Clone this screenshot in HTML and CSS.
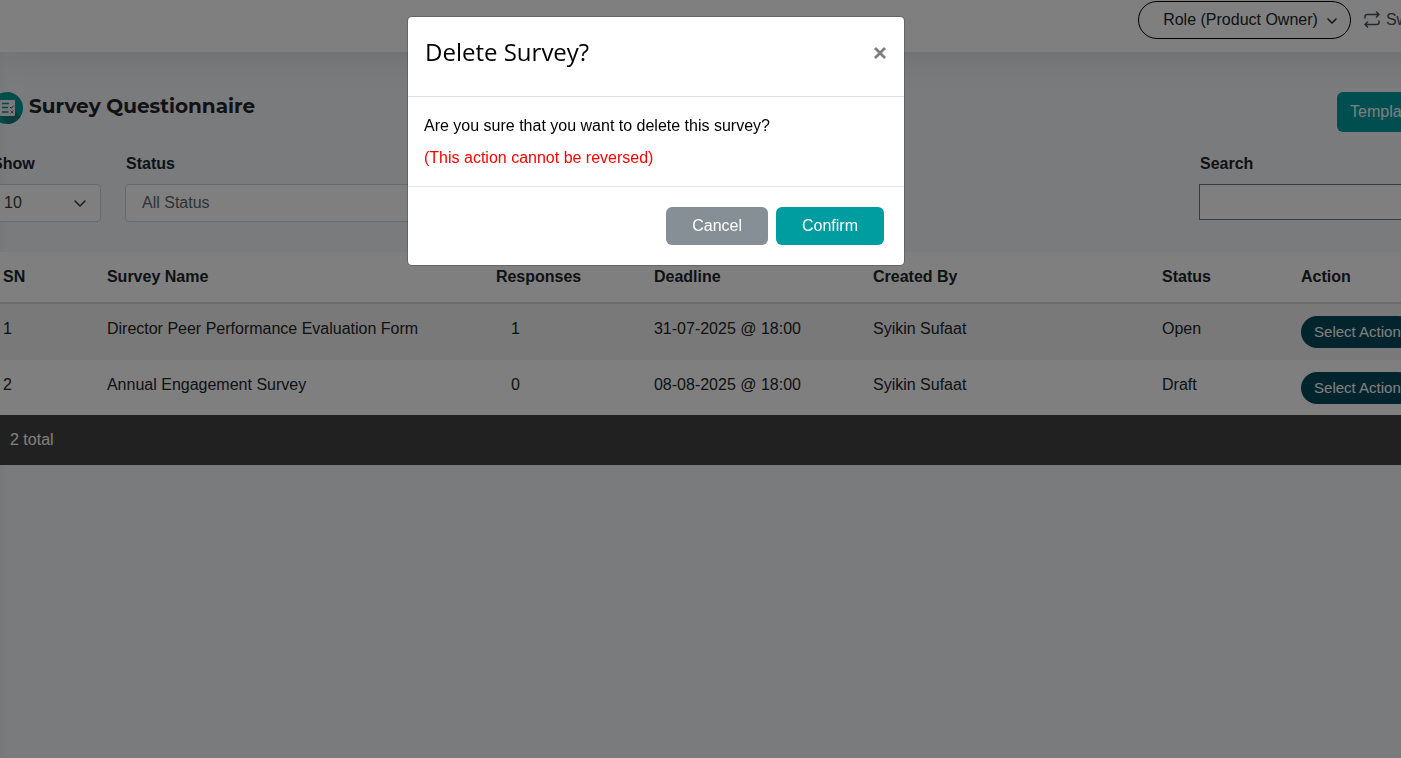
FILE: index.html
```html
<!DOCTYPE html>
<html lang="en">
<head>
<meta charset="utf-8">
<title>Survey Questionnaire</title>
<link rel="stylesheet" href="styles.css">
</head>
<body>
<div class="page">
  <header class="topbar">
    <div class="shell topbar-inner">
      <button type="button" class="role">Role (Product Owner)
        <svg width="12" height="12" viewBox="0 0 12 12" fill="none" stroke="currentColor" stroke-width="1.5" stroke-linecap="round" stroke-linejoin="round"><path d="M2 5l4 4 4-4"/></svg>
      </button>
      <a href="#" class="switch">
        <svg width="16" height="18" viewBox="0 0 16 18" fill="none" stroke="currentColor" stroke-width="1.5" stroke-linecap="round" stroke-linejoin="round"><path d="M1 7V5.500A2 2 0 0 1 3 3.500H15M12.500 1L15 3.500 12.500 6M15 10v1.500A2 2 0 0 1 13 13.500H1M3.500 11L1 13.500 3.500 16"/></svg>
        Switch
      </a>
    </div>
  </header>
  <main class="shell content">
    <div class="title-row">
      <h1 class="title">
        <svg width="32" height="32" viewBox="0 0 32 32"><circle cx="16" cy="16" r="16" fill="#009d96"/><path d="M9 24l7.500 8a16 16 0 0 0 13-7.500L24 19z" fill="#157a7c"/><rect x="9" y="8" width="15" height="16" rx="1" fill="#eef2f4"/><path d="M11 11.500h7M11 15.500h6M11 20h6.500" stroke="#0e8c8c" stroke-width="1.500"/><path d="M19 15l1.200 1.200L22.500 14" fill="none" stroke="#333" stroke-width="1"/><path d="M19.500 18.500l3 3M22.500 18.500l-3 3" stroke="#e2574c" stroke-width="1"/></svg>
        <span>Survey Questionnaire</span>
      </h1>
      <button type="button" class="btn-template">Templates</button>
    </div>
    <form class="filters">
      <div class="field field-show">
        <label for="show">Show</label>
        <div class="select-wrap">
          <select id="show" class="control"><option>10</option></select>
          <svg class="caret" width="14" height="14" viewBox="0 0 14 14" fill="none" stroke="#343a40" stroke-width="1.500" stroke-linecap="round" stroke-linejoin="round"><path d="M2 5l5 5 5-5"/></svg>
        </div>
      </div>
      <div class="field field-status">
        <label for="status">Status</label>
        <select id="status" class="control control-status"><option>All Status</option></select>
      </div>
      <div class="field field-search">
        <label for="search">Search</label>
        <input id="search" class="search" type="text">
      </div>
    </form>
    <table class="surveys">
      <colgroup><col class="c-sn"><col class="c-name"><col class="c-resp"><col class="c-dead"><col class="c-by"><col class="c-status"><col></colgroup>
      <thead>
        <tr><th>SN</th><th>Survey Name</th><th>Responses</th><th>Deadline</th><th>Created By</th><th>Status</th><th>Action</th></tr>
      </thead>
      <tbody>
        <tr><td>1</td><td>Director Peer Performance Evaluation Form</td><td class="count">1</td><td>31-07-2025 @ 18:00</td><td>Syikin Sufaat</td><td>Open</td><td class="action"><button type="button" class="pill">Select Action</button></td></tr>
        <tr><td>2</td><td>Annual Engagement Survey</td><td class="count">0</td><td>08-08-2025 @ 18:00</td><td>Syikin Sufaat</td><td>Draft</td><td class="action"><button type="button" class="pill">Select Action</button></td></tr>
      </tbody>
    </table>
    <div class="total">2 total</div>
  </main>
</div>
<div class="backdrop">
  <section class="modal" role="dialog" aria-modal="true" aria-labelledby="modal-title">
    <header class="modal-header">
      <h2 id="modal-title">Delete Survey?</h2>
      <button type="button" class="close" aria-label="Close"><svg width="12" height="12" viewBox="0 0 12 12" stroke="#7f7f7f" stroke-width="2.800"><path d="M1 1l10 10M11 1L1 11"/></svg></button>
    </header>
    <div class="modal-body">
      <p>Are you sure that you want to delete this survey?</p>
      <p class="warning">(This action cannot be reversed)</p>
    </div>
    <footer class="modal-footer">
      <button type="button" class="btn btn-cancel">Cancel</button>
      <button type="button" class="btn btn-confirm">Confirm</button>
    </footer>
  </section>
</div>
</body>
</html>
```

FILE: styles.css
```css
* { box-sizing: border-box; }
body {
  margin: 0;
  background: #f4f6f9;
  color: #212529;
  font: 16px/24px "Liberation Sans", Arial, sans-serif;
}
button, input, select { font: inherit; }
.page {
  min-height: 100vh;
  overflow: hidden;
  box-shadow: inset 8px 0 12px -10px rgba(0, 0, 0, .08);
}
.shell {
  width: calc(100% + 99px);
  margin-left: -9px;
}
.topbar {
  margin-right: -40px;
  background: #fff;
  box-shadow: 0 4px 36px rgba(0, 0, 0, .1);
}
.topbar-inner {
  display: flex;
  justify-content: flex-end;
  align-items: flex-start;
  gap: 13px;
  height: 52px;
  padding: 1px 98px 0 0;
}
.role {
  display: flex;
  align-items: center;
  gap: 8px;
  height: 38px;
  padding: 0 12px 0 24px;
  border: 1px solid #000;
  border-radius: 19px;
  background: #fff;
  color: #212529;
}
.switch {
  display: flex;
  align-items: center;
  gap: 6px;
  height: 38px;
  color: #495057;
  text-decoration: none;
}
.content { padding-top: 40px; }
.title-row {
  display: flex;
  justify-content: space-between;
  align-items: flex-start;
}
.title {
  display: flex;
  gap: 6px;
  margin: 0;
  font: 700 20px/28px Montserrat, Inter, sans-serif;
}
.btn-template {
  width: 154px;
  height: 40px;
  padding: 0 13px;
  border: 0;
  border-radius: 6px;
  background: #009da0;
  color: #fff;
  text-align: left;
}
.filters {
  display: flex;
  gap: 24px;
  margin: 20px 0 30px;
}
.field {
  display: flex;
  flex-direction: column;
  align-items: stretch;
  gap: 8px;
}
.field label {
  padding-left: 1px;
  font-weight: 700;
}
.field-show { width: 110px; }
.field-status { width: 420px; }
.field-search {
  width: 292px;
  margin-left: auto;
}
.select-wrap {
  display: grid;
  align-items: center;
}
.select-wrap > * { grid-area: 1 / 1; }
.caret {
  justify-self: end;
  margin-right: 14px;
  pointer-events: none;
}
.control {
  appearance: none;
  width: 100%;
  height: 38px;
  padding: 0 12px;
  border: 1px solid #ced4da;
  border-radius: 4px;
  background: #fff;
  color: #343a40;
}
.control-status {
  padding-left: 16px;
  color: #5f666d;
}
.search {
  height: 36px;
  border: 1px solid #767676;
  background: #fff;
}
.surveys {
  width: 100%;
  table-layout: fixed;
  border-collapse: separate;
  border-spacing: 0;
  background: #fff;
}
.c-sn { width: 6.93%; }
.c-name { width: 25.93%; }
.c-resp { width: 10.54%; }
.c-dead { width: 14.6%; }
.c-by { width: 19.27%; }
.c-status { width: 9.27%; }
.surveys th {
  height: 52px;
  padding: 13px 12px 11px;
  border-bottom: 2px solid #d6d6d6;
  text-align: left;
  vertical-align: top;
}
.surveys td {
  height: 56px;
  padding: 13px 12px 11px;
  vertical-align: top;
}
.surveys tbody tr:first-child { background: #f2f2f2; }
.surveys tbody tr:last-child td { height: 55px; }
.surveys .count { padding-left: 27px; }
.surveys .action { padding: 12px 12px 0; }
.pill {
  display: block;
  height: 32px;
  padding: 0 13px;
  border: 0;
  border-radius: 16px;
  background: #04495a;
  color: #fff;
  font-size: 15px;
  white-space: nowrap;
}
.total {
  height: 50px;
  padding: 13px 19px;
  background: #424242;
  color: #fff;
}
.backdrop {
  position: fixed;
  inset: 0;
  display: flex;
  justify-content: center;
  align-items: flex-start;
  padding: 16px 89px 16px 0;
  background: rgba(0, 0, 0, .5);
}
.modal {
  width: 498px;
  border: 1px solid rgba(0, 0, 0, .2);
  border-radius: 5px;
  background: #fff;
  background-clip: padding-box;
  color: #000;
}
.modal-header {
  display: flex;
  justify-content: space-between;
  align-items: flex-start;
  min-height: 80px;
  padding: 17px;
  border-bottom: 1px solid #dee2e6;
}
.modal-header h2 {
  margin: 0;
  font: 400 24px/36px "Open Sans", "Noto Sans", sans-serif;
}
.close {
  display: flex;
  align-items: center;
  height: 38px;
  padding: 0 1px;
  border: 0;
  background: none;
}
.modal-body { padding: 17px 16px 16px; }
.modal-body p { margin: 0; }
.modal-body .warning {
  margin-top: 8px;
  color: #f00;
}
.modal-footer {
  display: flex;
  justify-content: flex-end;
  gap: 8px;
  padding: 20px;
  border-top: 1px solid #dee2e6;
}
.btn {
  height: 38px;
  padding: 0 26px;
  border: 0;
  border-radius: 6px;
  color: #fff;
}
.btn-cancel { background: #868e96; }
.btn-confirm { background: #009da0; }
```
